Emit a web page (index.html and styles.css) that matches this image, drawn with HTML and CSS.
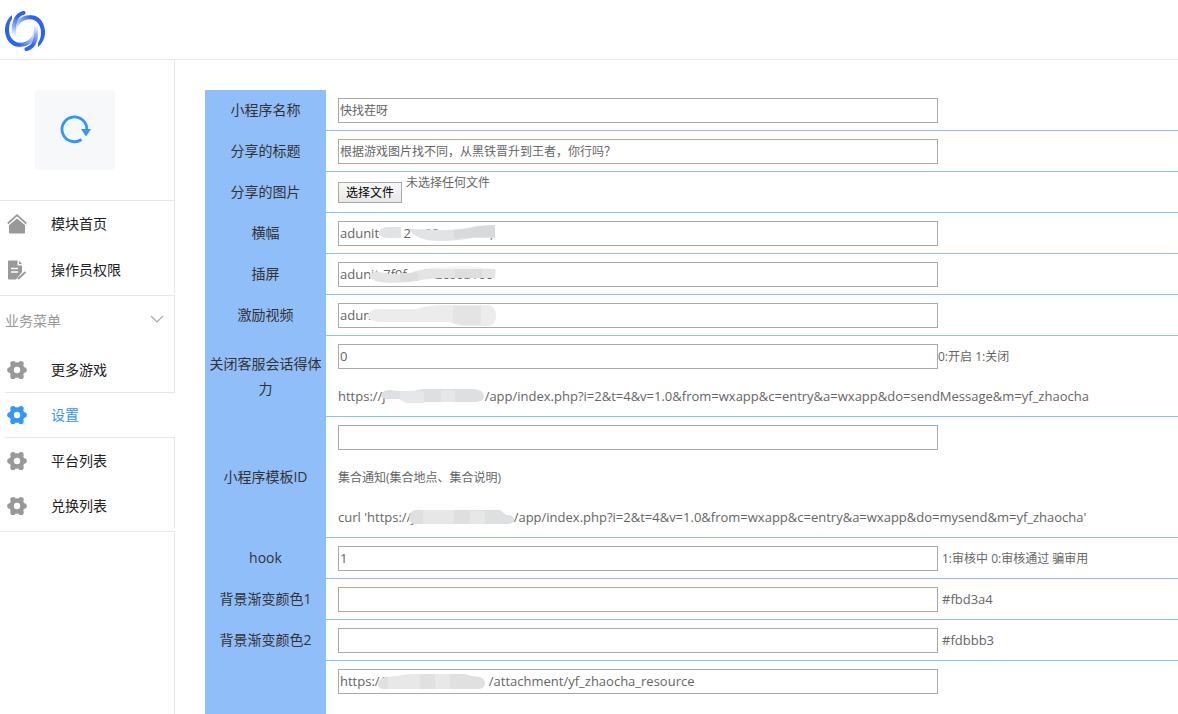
FILE: index.html
```html
<!DOCTYPE html>
<html lang="zh-CN">
<head>
<meta charset="utf-8">
<meta name="viewport" content="width=device-width, initial-scale=1">
<title>设置</title>
<link rel="stylesheet" href="styles.css">
</head>
<body>
<svg class="defs" aria-hidden="true">
  <symbol id="gear" viewBox="0 0 20 20">
    <g fill="none" stroke="currentColor">
      <circle cx="10" cy="10" r="5.500" stroke-width="4.600"/>
      <path d="M6 3.600v.1M14 3.600v.1M2.900 10h.1M17 10h.1M6 16.400v-.1M14 16.400v-.1" stroke-width="5.400" stroke-linecap="round"/>
    </g>
  </symbol>
</svg>
<header class="topbar">
  <a class="logo" href="#" aria-label="首页">
    <svg viewBox="0 0 40 40" width="40" height="40" fill="none" stroke-linecap="round">
      <defs>
        <linearGradient id="tail" gradientUnits="userSpaceOnUse" x1="14" y1="34" x2="31" y2="20"><stop offset="0" stop-color="#2b62fb"/><stop offset="1" stop-color="#2b62fb" stop-opacity="0"/></linearGradient>
        <linearGradient id="inner" gradientUnits="userSpaceOnUse" x1="14" y1="6" x2="10" y2="26"><stop offset="0" stop-color="#2b62fb"/><stop offset="1" stop-color="#2b62fb" stop-opacity="0"/></linearGradient>
        <g id="swirl">
          <path d="M7 4C2 8-.5 14 0 20.500 1 30 7 36 14.500 35.700V31.800C9 31.500 5 27 4.200 21 3.500 15 5 11 7 8Z" fill="#2b62fb"/>
          <path d="M14 33.700C24 34 31 27 31.500 16" stroke="url(#tail)" stroke-width="4" stroke-linecap="butt"/>
          <path d="M18.500 1.900C11 3.500 7 13 9.500 26" stroke="url(#inner)" stroke-width="4"/>
        </g>
      </defs>
      <use href="#swirl"/>
      <use href="#swirl" transform="rotate(180 20 20)"/>
    </svg>
  </a>
</header>
<div class="shell">
  <aside class="sidebar">
    <div class="module">
      <div class="module-icon">
        <svg viewBox="0 0 32 30" width="32" height="30" fill="none">
          <path d="M22.500 24.500A12.400 12.400 0 1 1 27.800 15" stroke="#3296fa" stroke-width="2.800"/>
          <path d="M22 14h10L27 21.500Z" fill="#3296fa"/>
        </svg>
      </div>
    </div>
    <nav class="group">
      <a class="item" href="#"><svg class="icon" viewBox="0 0 20 20"><path d="M10 4.500 18 11v7.500q0 1-1 1H3q-1 0-1-1V11Z"/><path d="M.8 9.500 10 1.200l9.200 8.300" fill="none" stroke="currentColor" stroke-width="1.800"/><path d="M1.500 11 10 3.500l8.500 7.500" fill="none" stroke="#fff" stroke-width=".9"/></svg>模块首页</a>
      <a class="item" href="#"><svg class="icon" viewBox="0 0 20 20"><path d="M2 .5h8.500v5h4.500v6.500L9 19.500H2q-1 0-1-1v-17q0-1 1-1Z"/><path d="M12 .8 15 4h-3Z"/><path d="M4 8.500h7M4 12h7" stroke="#fff" stroke-width="1.500"/><path d="m11 19 7.500-7" stroke="currentColor" stroke-width="1.800"/></svg>操作员权限</a>
    </nav>
    <nav class="group business">
      <button class="group-title" type="button">业务菜单<svg viewBox="0 0 14 8" width="14" height="8"><path d="m1 1 6 6 6-6" fill="none" stroke="#aaa" stroke-width="1.200"/></svg></button>
      <a class="item" href="#"><svg class="icon"><use href="#gear"/></svg>更多游戏</a>
      <a class="item active" href="#" aria-current="page"><svg class="icon"><use href="#gear"/></svg>设置</a>
      <a class="item" href="#"><svg class="icon"><use href="#gear"/></svg>平台列表</a>
      <a class="item" href="#"><svg class="icon"><use href="#gear"/></svg>兑换列表</a>
    </nav>
    <div class="rest"></div>
  </aside>
  <main class="content">
    <form class="form">
      <div class="row"><label class="name" for="title">小程序名称</label><div class="field"><div class="line"><input class="text" id="title" value="快找茬呀"></div></div></div>
      <div class="row"><label class="name" for="share">分享的标题</label><div class="field"><div class="line"><input class="text" id="share" value="根据游戏图片找不同，从黑铁晋升到王者，你行吗？"></div></div></div>
      <div class="row"><label class="name" for="image">分享的图片</label><div class="field"><div class="line upload"><span class="picker"><button class="choose" type="button" tabindex="-1">选择文件</button><input class="file" id="image" type="file"></span><span class="status">未选择任何文件</span></div></div></div>
      <div class="row"><label class="name" for="banner">横幅</label><div class="field"><div class="line"><input class="text latin" id="banner" value="adunit-      2    88               ,"><svg class="mask" viewBox="0 0 180 25"><path fill="#e2e3e4" d="M41 12q1-6 9-6h13v11H51q-9 0-10-5ZM72 8q16 0 31 1 20 0 35-4l19-1v13q-12 0-22 0-16 3-34 3-20 0-29-10Z"/><path fill="#d8d9da" d="M116 9q15-1 26-4l15-1v12h-18l-23 2Z"/></svg></div></div></div>
      <div class="row"><label class="name" for="insert">插屏</label><div class="field"><div class="line"><input class="text latin" id="insert" value="adunit-7f9f     b 2c60a16c"><svg class="mask" viewBox="0 0 180 25"><path fill="#f4f4f5" d="M90 6q30-3 50-1l18 3v4H92Z"/><path fill="#e4e4e5" d="M31 14q2-5 10-4 18 4 31 1 14-5 27-4h58v9h-46q-22 0-38 4-25 2-36-1Z"/><path fill="#ddd" d="M62 11h18v8H62ZM117 7h27v9h-27Z"/></svg></div></div></div>
      <div class="row"><label class="name" for="video">激励视频</label><div class="field"><div class="line"><input class="text latin" id="video" value="aduni"><svg class="mask" viewBox="0 0 180 25"><path fill="#ececec" d="M29 13q3-7 12-7h38q10-4 28-4h44q7 2 7 10 0 10-7 11h-22q-10 0-17-4H44q-12 0-15-6Z"/><path fill="#e4e4e4" d="M115 3h28v19h-16q-7 0-12-3Z"/></svg></div></div></div>
      <div class="row"><label class="name" for="service">关闭客服会话得体力</label><div class="field">
        <div class="line"><input class="text latin" id="service" value="0"><span class="hint">0:开启 1:关闭</span></div>
        <div class="line latin">https://j<svg class="blot" viewBox="0 0 105 18" width="105" height="18"><path fill="#dedfe0" d="M1 9q1-6 8-6l8 1h17l8-2h50q11 0 12 7 0 6-10 6H28q-6-1-8-3H8q-6 0-7-3Z"/><path fill="#e6e7e8" d="M20 4h24v12H27q-6-2-7-4ZM61 3h14v12H61Z"/></svg>/app/index.php?i=2&amp;t=4&amp;v=1.0&amp;from=wxapp&amp;c=entry&amp;a=wxapp&amp;do=sendMessage&amp;m=yf_zhaocha</div>
      </div></div>
      <div class="row"><label class="name" for="template">小程序模板ID</label><div class="field">
        <div class="line"><input class="text latin" id="template"></div>
        <div class="line hint">集合通知(集合地点、集合说明)</div>
        <div class="line latin">curl 'https://j<svg class="blot" viewBox="0 0 105 18" width="105" height="18"><path fill="#dedfe0" d="M0 10q1-8 7-8h84l6 5q8 0 8 5 0 4-8 4H5q-5-1-5-6Z"/><path fill="#e7e7e8" d="M14 2h31v14H14ZM61 3h15v13H61Z"/></svg>/app/index.php?i=2&amp;t=4&amp;v=1.0&amp;from=wxapp&amp;c=entry&amp;a=wxapp&amp;do=mysend&amp;m=yf_zhaocha'</div>
      </div></div>
      <div class="row"><label class="name" for="hook">hook</label><div class="field"><div class="line spaced"><input class="text latin" id="hook" value="1"><span class="hint">1:审核中 0:审核通过 骗审用</span></div></div></div>
      <div class="row"><label class="name" for="color1">背景渐变颜色1</label><div class="field"><div class="line spaced"><input class="text latin" id="color1"><span class="latin">#fbd3a4</span></div></div></div>
      <div class="row"><label class="name" for="color2">背景渐变颜色2</label><div class="field"><div class="line spaced"><input class="text latin" id="color2"><span class="latin">#fdbbb3</span></div></div></div>
      <div class="row last"><div class="name"></div><div class="field"><div class="line"><input class="text latin" aria-label="资源地址" value="https://ji                             /attachment/yf_zhaocha_resource"><svg class="mask" viewBox="0 0 180 25"><path fill="#e0e0e1" d="M40 15q1-7 10-7l10-1 12-2h55l6 2q14 0 14 7 0 6-8 6H46q-6 0-6-5Z"/><path fill="#e8e8e9" d="M50 8q10 0 22-3h10v15H50ZM97 5h15v15H97Z"/></svg></div></div></div>
    </form>
  </main>
</div>
</body>
</html>
```
FILE: styles.css
```css
* { box-sizing: border-box; }
body {
  margin: 0;
  min-height: 100vh;
  display: flex;
  flex-direction: column;
  background: #fff;
  color: #666;
  font: 12px/40px "Open Sans", "Noto Sans CJK SC", sans-serif;
}
.defs { position: absolute; width: 0; height: 0; }
.topbar { height: 60px; padding: 11px 5px; border-bottom: 1px solid #e7e7e7; }
.logo, .logo svg { display: block; width: 40px; }
.shell { flex: 1; display: flex; }
.sidebar {
  flex: 0 0 175px;
  display: flex;
  flex-direction: column;
  font-size: 14px;
}
.module { padding: 30px 35px; border-right: 1px solid #e7e7e7; border-bottom: 1px solid #e7e7e7; }
.module-icon {
  width: 80px;
  height: 80px;
  display: grid;
  place-items: center;
  border-radius: 4px;
  background: #f7f8fa;
}
.group { border-bottom: 1px solid #e7e7e7; padding-bottom: 2px; }
.item {
  display: flex;
  align-items: center;
  gap: 24px;
  height: 46px;
  padding-left: 7px;
  border-right: 1px solid #e7e7e7;
  color: #222;
  line-height: 20px;
  text-decoration: none;
}
.business { padding-bottom: 3px; }
.business .item { height: 45px; }
.icon { width: 20px; height: 20px; color: #98999b; fill: currentColor; }
.business .active {
  height: 46px;
  margin-left: 5px;
  padding-left: 2px;
  border: solid #e7e7e7;
  border-width: 1px 0;
  color: #3296fa;
}
.active .icon { color: #3296fa; }
.group-title {
  display: flex;
  align-items: center;
  justify-content: space-between;
  width: 100%;
  height: 51px;
  padding: 0 10px 2px 5px;
  border: 0;
  border-right: 1px solid #e7e7e7;
  background: none;
  color: #999;
  font: inherit;
}
.group-title svg { margin-bottom: 4px; }
.rest { flex: 1; border-right: 1px solid #e7e7e7; }
.content { flex: 1; min-width: 0; display: flex; padding: 30px 0 0 30px; }
.form { flex: 1; min-width: 0; display: flex; flex-direction: column; }
.row { display: grid; grid-template-columns: 121px 1fr; }
.name {
  display: grid;
  place-items: center;
  padding: 0 4px 2px;
  background: #90bef8;
  color: #333;
  font-size: 14px;
  line-height: 25px;
  text-align: center;
}
.field { min-width: 0; padding-left: 12px; border-bottom: 1px solid #90bef8; }
.last { flex: 1; }
.last .field { border-bottom: 0; }
.line { position: relative; display: flex; align-items: center; height: 40px; white-space: nowrap; }
.spaced { gap: 4px; }
.hint { padding-top: 2px; }
.text {
  width: 600px;
  height: 25px;
  padding: 0 1px;
  border: 1px solid #a9a9a9;
  background: #fff;
  color: #666;
  font: inherit;
  line-height: 20px;
}
.latin, .text.latin { font-size: 13px; }
.mask { position: absolute; left: 0; top: 8px; width: 180px; height: 25px; pointer-events: none; }
.blot { position: relative; flex: none; margin-left: -6px; }
.upload { gap: 4px; }
.picker { position: relative; display: flex; }
.choose {
  height: 21px;
  padding: 1px 7px 0;
  border: 1px solid #a9a9a9;
  background: linear-gradient(#f8f8f8, #e8e8e8);
  color: #000;
  font: inherit;
  line-height: 18px;
}
.file { position: absolute; inset: 0; width: 100%; opacity: 0; }
.status { align-self: flex-start; line-height: 22px; }
```
